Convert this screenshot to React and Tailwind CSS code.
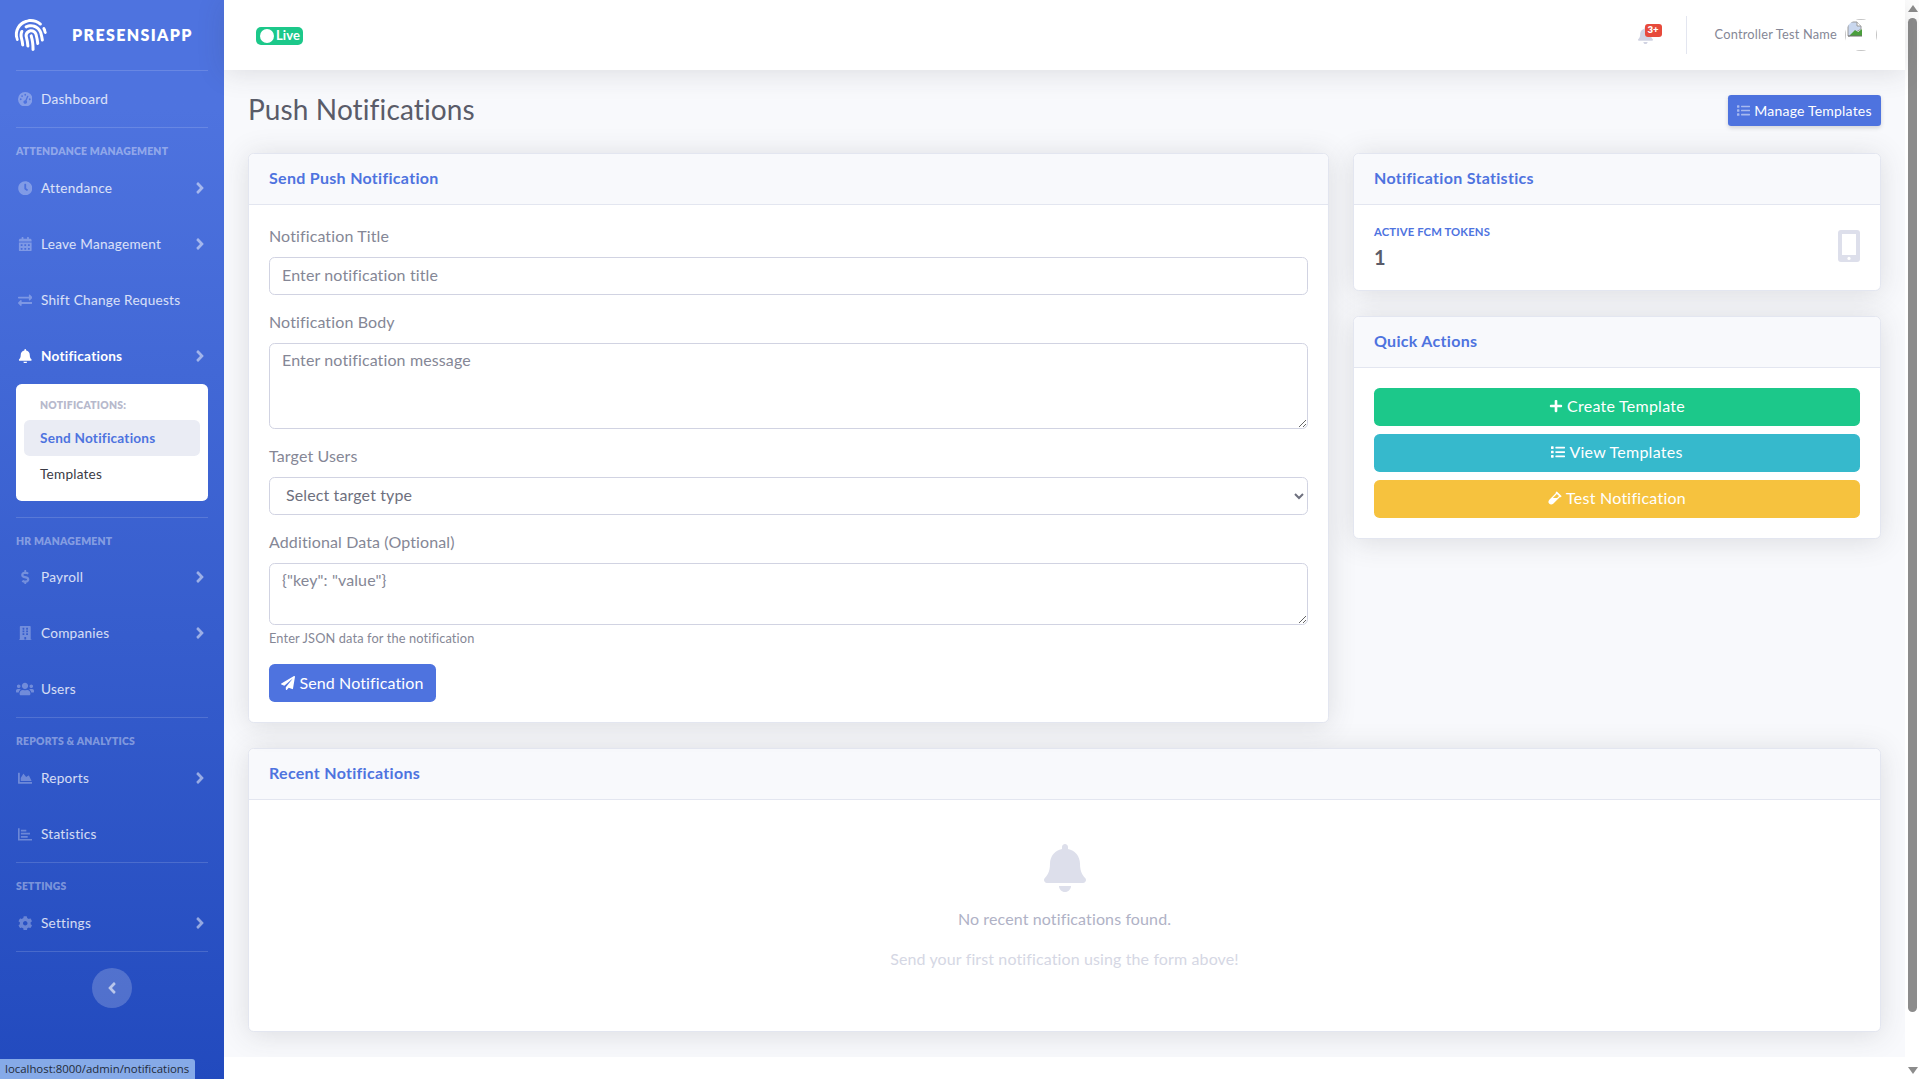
import {
  FaFingerprint, FaClock, FaCalendarAlt, FaExchangeAlt, FaBell, FaDollarSign,
  FaBuilding, FaUsers, FaChartArea, FaCog, FaAngleRight, FaAngleLeft, FaList,
  FaPlus, FaPaperPlane, FaVial,
} from 'react-icons/fa';
import { FaGaugeHigh } from 'react-icons/fa6';

// the older chart-bar glyph: horizontal bars on an L axis
function ChartBarIcon({ size, className }) {
  return (
    <svg width={size} height={size} viewBox="0 0 16 16" fill="currentColor" className={className}>
      <path d="M0 1.5h1.8v11.7H16V15H0z" />
      <path d="M3.2 3h6v2h-6zM3.2 6.4h10v2h-10zM3.2 9.8h7.5v2H3.2z" />
    </svg>
  );
}

function PhoneIcon() {
  return (
    <svg width="22" height="32" viewBox="0 0 22 32" className="mt-[-2px]">
      <rect width="22" height="32" rx="3" fill="#dddfeb" />
      <rect x="4" y="4" width="14" height="21" fill="#fff" />
      <circle cx="11" cy="28.4" r="1.6" fill="#fff" />
    </svg>
  );
}

function Divider() {
  return <div className="mx-4 h-px bg-white/15" />;
}

function Heading({ children, short }) {
  return (
    <div className={`${short ? 'h-[31px]' : 'h-8'} px-4 pt-4 text-[10.4px] leading-[14px] font-extrabold uppercase tracking-[0.2px] text-white/40`}>
      {children}
    </div>
  );
}

function NavItem({ icon: Icon, label, arrow, active, size = 14.5 }) {
  return (
    <div className={`flex h-14 items-center pl-4 pr-[15px] text-[13.6px] tracking-[0.25px] ${active ? 'font-bold text-white' : 'text-white/80'}`}>
      <span className="flex w-[18px] justify-center">
        <Icon size={size} className={active ? 'text-white' : 'text-white/30'} />
      </span>
      <span className="ml-[7px] flex-1">{label}</span>
      {arrow && <FaAngleRight size={18} className="text-white/50" />}
    </div>
  );
}

function Sidebar() {
  return (
    <aside className="w-[224px] shrink-0 bg-gradient-to-b from-[#4e73df] from-10% to-[#224abe]">
      <div className="flex h-[70px] items-center">
        <FaFingerprint size={32} className="ml-[15px] -rotate-[15deg] text-white" />
        <span className="ml-[25px] text-[16px] font-extrabold uppercase tracking-[1.35px] text-white">PresensiApp</span>
      </div>
      <Divider />
      <NavItem icon={FaGaugeHigh} label="Dashboard" />
      <Divider />
      <Heading>Attendance Management</Heading>
      <NavItem icon={FaClock} label="Attendance" arrow />
      <NavItem icon={FaCalendarAlt} label="Leave Management" arrow />
      <NavItem icon={FaExchangeAlt} label="Shift Change Requests" />
      <NavItem icon={FaBell} label="Notifications" arrow active />
      <div className="mx-4 mb-4 h-[117px] rounded-[5.6px] bg-white px-2 py-2 text-[13.6px] tracking-[0.22px]">
        <div className="flex h-7 items-center pl-4 text-[10.4px] font-extrabold uppercase text-[#b7b9cc]">Notifications:</div>
        <div className="flex h-9 items-center rounded-[5.6px] bg-[#eaecf4] pl-4 font-bold text-[#4e73df]">Send Notifications</div>
        <div className="flex h-9 items-center pl-4 text-[#3a3b45]">Templates</div>
      </div>
      <Divider />
      <Heading short>HR Management</Heading>
      <NavItem icon={FaDollarSign} label="Payroll" arrow />
      <NavItem icon={FaBuilding} label="Companies" arrow />
      <NavItem icon={FaUsers} label="Users" size={18} />
      <Divider />
      <Heading>Reports &amp; Analytics</Heading>
      <NavItem icon={FaChartArea} label="Reports" arrow />
      <NavItem icon={ChartBarIcon} label="Statistics" />
      <Divider />
      <Heading>Settings</Heading>
      <NavItem icon={FaCog} label="Settings" arrow />
      <Divider />
      <div className="mt-4 flex justify-center">
        <div className="flex h-10 w-10 items-center justify-center rounded-full bg-white/20">
          <FaAngleLeft size={18} className="text-white/60" />
        </div>
      </div>
    </aside>
  );
}

function BrokenImage() {
  return (
    <svg width="16" height="16" viewBox="0 0 16 16" className="ml-px mt-px">
      <path d="M1 1h9l4 4v3L9 11l-3 1-3 3H1z" fill="#c9d7ee" stroke="#9a9a9a" strokeWidth="1" />
      <path d="M10 1v4h4" fill="#fff" stroke="#9a9a9a" strokeWidth="1" />
      <path d="M3 14l5-5 3 2 4-3v7H3z" fill="#4a9e3c" />
      <path d="M1 15h14" stroke="#6f6f6f" strokeWidth="1" />
    </svg>
  );
}

function Topbar() {
  return (
    <header className="relative z-10 flex h-[70px] shrink-0 items-center bg-white pl-8 pr-[28px] shadow-[0_2.4px_28px_0_rgba(58,59,69,0.15)]">
      <div className="mt-px flex h-[18px] w-[47px] items-center rounded-[5px] bg-[#1cc88a] pl-[4px] text-[13px] font-bold text-white">
        <span className="h-[14px] w-[14px] rounded-full bg-white" />
        <span className="ml-[2px]">Live</span>
      </div>
      <div className="ml-auto flex items-center">
        <div className="relative mr-[34px] h-[17px] w-[15px]">
          <FaBell size={17} className="text-[#d1d3e2]" />
          <span className="absolute -top-[3px] left-[8px] flex h-[13px] w-[17px] items-center justify-center rounded-[3px] bg-[#e74a3b] text-[9.6px] font-extrabold text-white">3+</span>
        </div>
        <div className="h-[38px] w-px bg-[#e3e6f0]" />
        <span className="ml-7 text-[12.8px] tracking-[0.2px] text-[#858796]">Controller Test Name</span>
        <div className="ml-2 h-8 w-8 overflow-hidden rounded-full">
          <div className="h-full w-full border border-[#c4c4c4]">
            <BrokenImage />
          </div>
        </div>
      </div>
    </header>
  );
}

function Card({ title, children, className = '' }) {
  return (
    <section className={`rounded-[5.6px] border border-[#e3e6f0] bg-white shadow-[0_2.4px_28px_0_rgba(58,59,69,0.15)] ${className}`}>
      <div className="flex h-[51px] items-center rounded-t-[5.6px] border-b border-[#e3e6f0] bg-[#f8f9fc] px-5 pb-[3px]">
        <h6 className="text-[16px] font-bold tracking-[0.3px] text-[#4e73df]">{title}</h6>
      </div>
      <div className="p-5">{children}</div>
    </section>
  );
}

const fieldClass =
  'block w-full rounded-[5.6px] border border-[#d1d3e2] bg-white px-3 pt-1 pb-2 text-[16px] leading-6 text-[#6e707e] placeholder:text-[#858796]';

function Field({ label, children }) {
  return (
    <div className="mb-4">
      <label className="mb-2 block h-6 text-[16px] leading-[22px]">{label}</label>
      {children}
    </div>
  );
}

function ActionButton({ icon: Icon, label, color }) {
  return (
    <button className={`flex h-[38px] w-full items-center justify-center gap-1 rounded-[5.6px] pb-[2px] text-[16px] tracking-[0.25px] text-white ${color}`}>
      <Icon size={14} />
      {label}
    </button>
  );
}

export default function App() {
  return (
    <div className="relative flex h-[1079px] w-full overflow-hidden bg-white font-['Lato',sans-serif] tracking-[0.12px] text-[#858796]">
      <Sidebar />
      <main className="flex min-w-0 flex-1 flex-col">
        <Topbar />
        <div className="h-[987px] shrink-0 bg-[#f8f9fc] px-6 pt-6">
          <div className="mb-6 flex h-[35px] items-center justify-between">
            <h1 className="-mt-[5px] text-[28px] font-normal text-[#5a5c69]">Push Notifications</h1>
            <button className="-mt-[2px] flex h-[31px] w-[153px] items-center justify-center gap-1 rounded-[3.2px] bg-[#4e73df] text-[14px] tracking-[0.2px] text-white shadow-[0_2px_4px_0_rgba(58,59,69,0.2)]">
              <FaList size={13} className="text-white/50" />
              Manage Templates
            </button>
          </div>

          <div className="grid grid-cols-[1081px_1fr] gap-x-6">
            <Card title="Send Push Notification">
              <Field label="Notification Title">
                <input className={`${fieldClass} h-[38px]`} placeholder="Enter notification title" />
              </Field>
              <Field label="Notification Body">
                <textarea className={`${fieldClass} h-[86px]`} placeholder="Enter notification message" />
              </Field>
              <Field label="Target Users">
                <select className={`${fieldClass} h-[38px]`} defaultValue="">
                  <option value="">Select target type</option>
                </select>
              </Field>
              <div className="mb-4">
                <label className="mb-2 block h-6 text-[16px] leading-[22px]">Additional Data (Optional)</label>
                <textarea className={`${fieldClass} h-[62px]`} placeholder={'{"key": "value"}'} />
                <small className="mt-1 block text-[12.8px] leading-[19px]">Enter JSON data for the notification</small>
              </div>
              <button className="mt-px flex h-[38px] w-[167px] items-center justify-center gap-1 rounded-[5.6px] bg-[#4e73df] pb-px text-[16px] text-white">
                <FaPaperPlane size={14} />
                Send Notification
              </button>
            </Card>

            <div>
              <Card title="Notification Statistics" className="mb-[25px]">
                <div className="flex items-center justify-between pb-px">
                  <div>
                    <div className="mb-[6px] text-[11.3px] leading-[14px] font-bold uppercase text-[#4e73df]">Active FCM Tokens</div>
                    <div className="text-[20px] leading-6 font-bold text-[#5a5c69]">1</div>
                  </div>
                  <PhoneIcon />
                </div>
              </Card>
              <Card title="Quick Actions">
                <div className="flex flex-col gap-2">
                  <ActionButton icon={FaPlus} label="Create Template" color="bg-[#1cc88a]" />
                  <ActionButton icon={FaList} label="View Templates" color="bg-[#36b9cc]" />
                  <ActionButton icon={FaVial} label="Test Notification" color="bg-[#f6c23e]" />
                </div>
              </Card>
            </div>
          </div>

          <Card title="Recent Notifications" className="mt-[25px]">
            <div className="flex flex-col items-center pb-6 pt-6 text-center">
              <FaBell size={48} className="mb-[15px] text-[#dddfeb]" />
              <p className="mb-4 text-[16px] leading-6 text-[#b0b2c6]">No recent notifications found.</p>
              <p className="mb-4 text-[16px] leading-6 text-[#d5d7e4]">Send your first notification using the form above!</p>
            </div>
          </Card>
        </div>
        <div className="flex-1 bg-white" />
      </main>

      <div className="relative w-[14px] shrink-0 bg-white">
        <svg width="10" height="8" viewBox="0 0 10 8" className="absolute left-[3px] top-[5px]">
          <path d="M5 0l5 7H0z" fill="#8c8c8c" />
        </svg>
        <div className="absolute left-[3px] top-[18px] h-[994px] w-[9px] rounded-full bg-[#8c8c8c]" />
        <svg width="10" height="8" viewBox="0 0 10 8" className="absolute bottom-[4px] left-[3px]">
          <path d="M5 7L0 0h10z" fill="#8c8c8c" />
        </svg>
      </div>

      <div className="absolute bottom-0 left-0 flex h-5 w-[195px] items-center rounded-tr-[3px] bg-[#86aae8] pl-[5px] font-['Open_Sans',sans-serif] text-[11.4px] tracking-normal text-[#1f2a3a]">
        localhost:8000/admin/notifications
      </div>
    </div>
  );
}
